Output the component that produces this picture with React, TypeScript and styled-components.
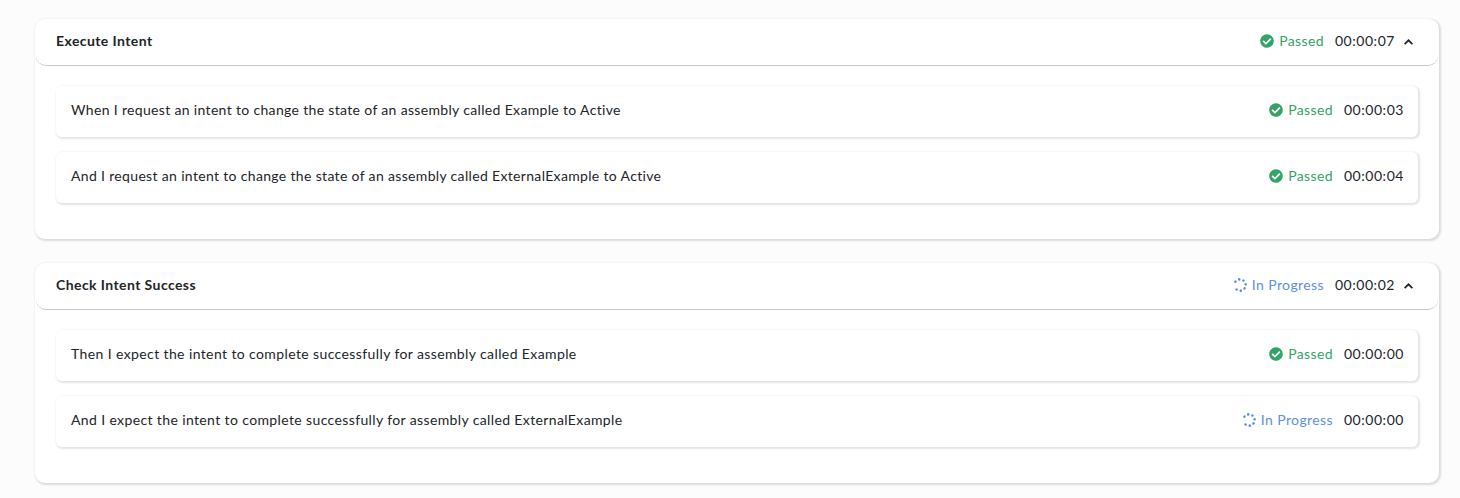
import React from "react";
import styled, { createGlobalStyle } from "styled-components";
import { FaCheckCircle, FaSpinner } from "react-icons/fa";

const GlobalStyle = createGlobalStyle`
  * { box-sizing: border-box; }
  body {
    margin: 0;
    background: #fcfcfc;
    color: #212529;
    font: 400 14px/21px Lato, "Noto Sans", sans-serif;
  }
`;

const Page = styled.main`
  display: flex;
  flex-direction: column;
  gap: 24px;
  height: 498px;
  padding: 19px 21px 0 35px;
  overflow: hidden;
`;

const Card = styled.section`
  height: 220px;
  flex: none;
  padding: 0 1px;
  background: #fff;
  border-radius: 10px;
  box-shadow: 1px 1px 2px 1px rgba(0, 0, 0, 0.13);
`;

const CardHeader = styled.header`
  display: flex;
  align-items: center;
  justify-content: space-between;
  height: 47px;
  padding: 0 25px 3px 20px;
  border-bottom: 1px solid #c5c9cd;
  border-radius: 10px;
`;

const Title = styled.h2`
  margin: 0;
  font-size: 14px;
  font-weight: 700;
  letter-spacing: 0.42px;
`;

const Steps = styled.div`
  display: flex;
  flex-direction: column;
  gap: 15px;
  padding: 20px;
`;

const Step = styled.div`
  display: flex;
  align-items: center;
  justify-content: space-between;
  height: 51px;
  padding: 0 14px 4px 15px;
  border-radius: 6px;
  box-shadow: 1px 1px 2px 1px rgba(0, 0, 0, 0.11);
`;

const StepText = styled.span<{ $tracking: number }>`
  letter-spacing: ${(p) => p.$tracking}px;
`;

const Result = styled.div`
  display: flex;
  align-items: center;
`;

const Status = styled.span<{ $running: boolean }>`
  display: flex;
  align-items: center;
  gap: 5px;
  margin-right: 10px;
  color: ${(p) => (p.$running ? "#5c8fe3" : "#33a466")};
  letter-spacing: ${(p) => (p.$running ? 0.4 : 0.38)}px;
`;

const Spinner = styled(FaSpinner)`
  transform: rotate(-143deg);
`;

const Time = styled.span`
  width: 61px;
  text-align: right;
  white-space: nowrap;
  letter-spacing: 0.55px;
`;

const Chevron = styled.svg`
  width: 9px;
  height: 6px;
  margin: 3px 0 0 9px;
`;

type Outcome = { status: "Passed" | "In Progress"; time: string };
type StepData = Outcome & { text: string; tracking: number };

const scenarios: (Outcome & { title: string; steps: StepData[] })[] = [
  {
    title: "Execute Intent",
    status: "Passed",
    time: "00:00:07",
    steps: [
      { text: "When I request an intent to change the state of an assembly called Example to Active", tracking: 0.335, status: "Passed", time: "00:00:03" },
      { text: "And I request an intent to change the state of an assembly called ExternalExample to Active", tracking: 0.335, status: "Passed", time: "00:00:04" },
    ],
  },
  {
    title: "Check Intent Success",
    status: "In Progress",
    time: "00:00:02",
    steps: [
      { text: "Then I expect the intent to complete successfully for assembly called Example", tracking: 0.39, status: "Passed", time: "00:00:00" },
      { text: "And I expect the intent to complete successfully for assembly called ExternalExample", tracking: 0.375, status: "In Progress", time: "00:00:00" },
    ],
  },
];

function Outcome({ status, time }: Outcome) {
  const running = status === "In Progress";
  return (
    <>
      <Status $running={running}>
        {running ? <Spinner size={14} /> : <FaCheckCircle size={14} />}
        {status}
      </Status>
      <Time>{time}</Time>
    </>
  );
}

export default function App() {
  return (
    <>
      <GlobalStyle />
      <Page>
        {scenarios.map((s) => (
          <Card key={s.title}>
            <CardHeader>
              <Title>{s.title}</Title>
              <Result>
                <Outcome status={s.status} time={s.time} />
                <Chevron viewBox="0 0 9 6" fill="none" stroke="#212529" strokeWidth="1.7">
                  <path d="M0.6 5.2 4.5 1.3 8.4 5.2" />
                </Chevron>
              </Result>
            </CardHeader>
            <Steps>
              {s.steps.map((step) => (
                <Step key={step.text}>
                  <StepText $tracking={step.tracking}>{step.text}</StepText>
                  <Result>
                    <Outcome status={step.status} time={step.time} />
                  </Result>
                </Step>
              ))}
            </Steps>
          </Card>
        ))}
      </Page>
    </>
  );
}
